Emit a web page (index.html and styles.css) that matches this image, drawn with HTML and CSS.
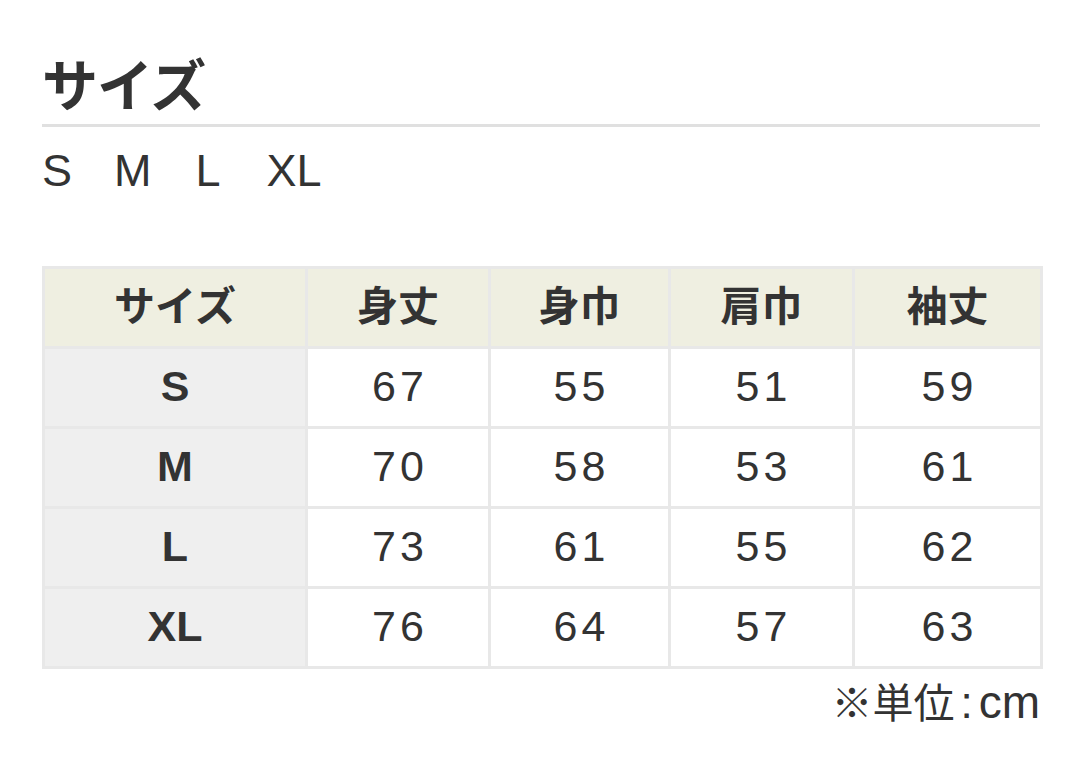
FILE: index.html
```html
<!DOCTYPE html>
<html lang="ja">
<head>
<meta charset="utf-8">
<link rel="stylesheet" href="styles.css">
</head>
<body>
<main class="page">
  <h2 class="title">サイズ</h2>
  <ul class="sizes">
    <li>S</li><li>M</li><li>L</li><li>XL</li>
  </ul>
  <table class="chart">
    <colgroup>
      <col class="c1"><col class="c2"><col class="c3"><col class="c4"><col class="c5">
    </colgroup>
    <thead>
      <tr><th>サイズ</th><th>身丈</th><th>身巾</th><th>肩巾</th><th>袖丈</th></tr>
    </thead>
    <tbody>
      <tr><th>S</th><td>67</td><td>55</td><td>51</td><td>59</td></tr>
      <tr><th>M</th><td>70</td><td>58</td><td>53</td><td>61</td></tr>
      <tr><th>L</th><td>73</td><td>61</td><td>55</td><td>62</td></tr>
      <tr><th>XL</th><td>76</td><td>64</td><td>57</td><td>63</td></tr>
    </tbody>
  </table>
  <p class="unit">※単位<span class="colon">:</span><span class="latin">cm</span></p>
</main>
</body>
</html>
```
FILE: styles.css
```css
html, body {
  margin: 0;
  padding: 0;
  background: #fff;
}
body {
  font-family: "Liberation Sans", "Noto Sans CJK JP", sans-serif;
  color: #333;
}
.page {
  width: 998px;
  padding: 44px 0 0 42px;
}
.title {
  margin: 0;
  font-family: "Noto Sans CJK JP", sans-serif;
  font-weight: 700;
  font-size: 56px;
  line-height: 76px;
  padding-bottom: 4px;
  border-bottom: 3px solid #e0e0e0;
  letter-spacing: -1px;
}
.sizes {
  list-style: none;
  margin: 0;
  padding: 0;
  display: flex;
  gap: 42px;
  font-size: 45px;
  line-height: 52px;
  margin-top: 18px;
}
.sizes li:nth-child(3) { margin-left: 2px; }
.sizes li:nth-child(4) { margin-left: 4px; }
.chart {
  margin-top: 69px;
  width: 998px;
  border-collapse: collapse;
  table-layout: fixed;
}
.c1 { width: 263px; }
.c2 { width: 183px; }
.c3 { width: 180px; }
.c4 { width: 184px; }
.c5 { width: 188px; }
.chart th, .chart td {
  border: 3px solid #e8e8e8;
  height: 80px;
  padding: 0 0 2px;
  box-sizing: border-box;
  text-align: center;
  vertical-align: middle;
  font-size: 43px;
}
.chart thead th {
  background: #efefe1;
  font-family: "Noto Sans CJK JP", sans-serif;
  font-weight: 700;
  font-size: 41px;
  padding: 0 0 10px;
}
.chart tbody th {
  background: #efefef;
  font-weight: 700;
}
.chart td {
  font-weight: 400;
  letter-spacing: 4px;
  padding-left: 4px;
}
.unit {
  margin: 8px 0 0;
  text-align: right;
  font-size: 41px;
  line-height: 50px;
}
.colon {
  margin: 0 6px;
  font-size: 44px;
}
.latin {
  font-size: 46px;
}
```
